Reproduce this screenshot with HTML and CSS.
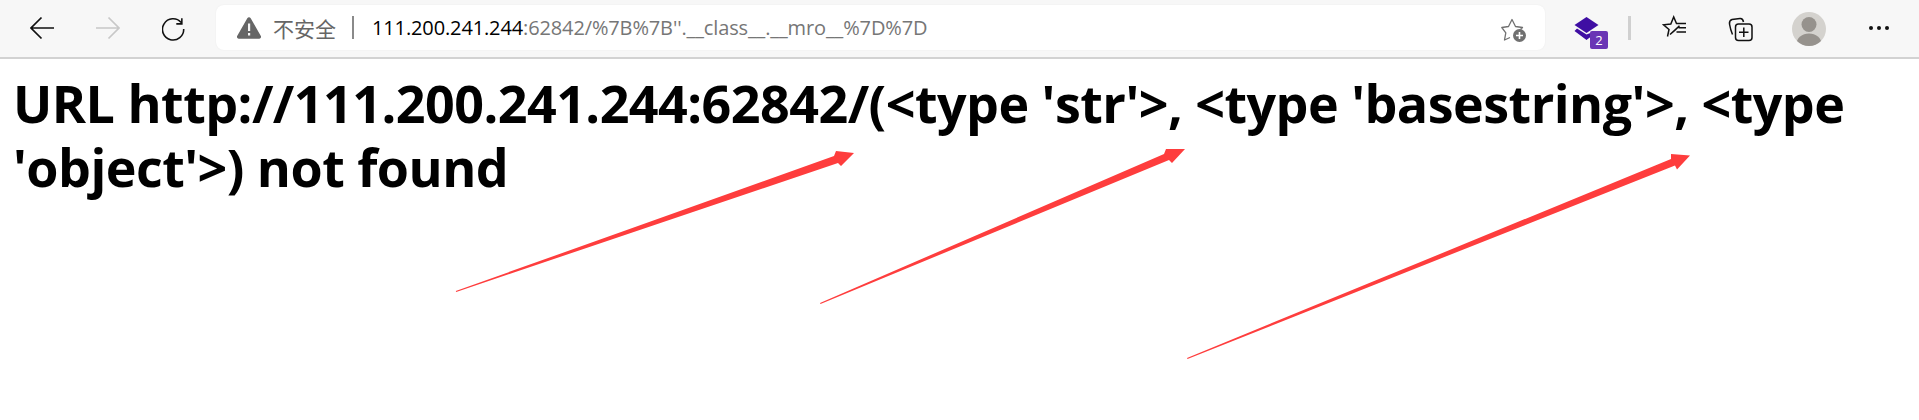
FILE: index.html
```html
<!DOCTYPE html>
<html lang="zh">
<head>
<meta charset="utf-8">
<title>URL not found</title>
<link rel="stylesheet" href="styles.css">
</head>
<body>
<header class="toolbar">
  <nav class="nav">
    <span class="btn"><svg width="24" height="24" viewBox="0 0 24 24" class="ic"><path d="M1 12H24M11.5 1.5 1 12 11.5 22.500"/></svg></span>
    <span class="btn dim"><svg width="24" height="24" viewBox="0 0 24 24" class="ic"><path d="M0 12H23M12.500 1.500 23 12 12.500 22.500"/></svg></span>
    <span class="btn"><svg width="26" height="26" viewBox="0 0 26 26" class="ic"><path d="M20.700 7A11.500 11.500 0 1 0 23.500 14M21.500 2.500V8.500H15.500"/></svg></span>
  </nav>
  <div class="address">
    <svg class="warn" width="24" height="22" viewBox="0 0 24 22"><path d="M10.300 1.200a2 2 0 0 1 3.400 0l10 17.500A2 2 0 0 1 22 21.800H2A2 2 0 0 1 .3 18.700z" fill="#666"/><path d="M11 6.500h2.200V14H11zM11 16h2.200v2.400H11z" fill="#f7f7f7"/></svg>
    <span class="insecure">不安全</span>
    <span class="bar"></span>
    <span class="url"><span class="host">111.200.241.244</span>:62842/%7B%7B''.__class__.__mro__%7D%7D</span>
    <svg class="star" width="26" height="26" viewBox="0 0 26 26"><path d="M9 20.500 3.500 23 4.800 15.800 0.800 10.500 7.500 9.500 11 2.500 14.500 9.500 21.500 10.500 19.500 12.500" fill="none" stroke="#707070" stroke-width="1.300" stroke-linejoin="round"/><circle cx="18.500" cy="18.500" r="6.500" fill="#707070"/><path d="M18.500 15v7M15 18.500h7" stroke="#fff" stroke-width="1.600"/></svg>
  </div>
  <div class="tools">
    <span class="ext">
      <svg width="26" height="27" viewBox="0 -2 26 27"><path d="M12.500 0 24.500 8 12.500 16 .5 8z" fill="#3f0ea3"/><path d="M3 11.500 .5 14 12.500 23 19 18V15L12.500 17.500z" fill="#3f0ea3"/></svg>
      <span class="badge">2</span>
    </span>
    <span class="vsep"></span>
    <span class="tool fav"><svg width="25" height="25" viewBox="0 0 25 25" class="ic thin"><path d="M5.500 21.500 7 14.500 1.500 9.800 8.800 9 11.700 2 14.500 8.500H17.500M17.500 10.800 13 15.300 8 19.500zM16.500 12.800H24M14.500 17H24M16 8.500H24"/></svg></span>
    <span class="tool coll"><svg width="25" height="25" viewBox="0 0 25 25" class="ic thin"><path d="M4.500 17.500C2.800 13.500 2 10 1.500 7 1.200 4.500 2 3.200 4 2.500L12 1.500C14 1.300 15 2.200 15.500 5"/><rect x="7.500" y="7" width="16.500" height="16.500" rx="3"/><path d="M15.800 10.500V20M11 15.200H20.500"/></svg></span>
    <span class="avatar"><svg width="34" height="34" viewBox="0 0 34 34"><defs><clipPath id="round"><circle cx="17" cy="17" r="17"/></clipPath></defs><g clip-path="url(#round)"><rect width="34" height="34" fill="#d4d2ce"/><circle cx="17" cy="12.500" r="7.500" fill="#96928d"/><ellipse cx="17" cy="32" rx="12.500" ry="10.500" fill="#96928d"/></g></svg></span>
    <span class="more"><i></i><i></i><i></i></span>
  </div>
</header>
<main class="page">
  <h1 class="title">URL http://111.200.241.244:62842/(&lt;type 'str'&gt;, &lt;type 'basestring'&gt;, &lt;type 'object'&gt;) not found</h1>
</main>
<svg class="arrows" width="1919" height="420" viewBox="0 0 1919 420">
  <path d="M455.800 291 456.200 292 838 163 841 166 854 153 836 151 834 156z"/>
  <path d="M820 303 820.500 304 1169 160 1172 163 1185 149 1166 149 1164 154z"/>
  <path d="M1187 358 1187.500 359 1675 165.500 1677 169.500 1690 155.500 1671 154 1671 159z"/>
</svg>
</body>
</html>
```
FILE: styles.css
```css
* { box-sizing: border-box; }
html, body { margin: 0; padding: 0; background: #fff; }
body { position: relative; width: 1919px; height: 420px; overflow: hidden; font-family: "Open Sans", "Noto Sans", "Noto Sans CJK SC", sans-serif; }
.toolbar { display: flex; align-items: center; height: 59px; padding: 0 0 2px 30px; background: #f7f7f7; border-bottom: 2px solid #d2d2d2; }
.nav { display: flex; align-items: center; gap: 42px; width: 186px; flex: none; }
.btn { display: flex; width: 24px; height: 26px; align-items: center; justify-content: center; }
.ic { fill: none; stroke: #111; stroke-width: 1.700; }
.ic.thin { stroke-width: 1.500; }
.dim .ic { stroke: #c8c8c8; }
.address { display: flex; align-items: center; width: 1329px; height: 45px; flex: none; margin-right: 29px; padding: 0 18px 0 21px; background: #fff; border-radius: 8px; box-shadow: 0 0 2px rgba(0,0,0,.05); }
.warn { flex: none; }
.insecure { margin-left: 12px; font-size: 21px; color: #666; }
.bar { width: 2px; height: 23px; margin: 0 18px 0 16px; background: #8a8a8a; }
.url { flex: 1; font-size: 20px; color: #767676; white-space: nowrap; letter-spacing: -.13px; }
.host { color: #000; }
.star { flex: none; margin-top: 4px; }
.tools { display: flex; align-items: center; flex: 1; }
.ext { position: relative; display: block; width: 34px; height: 34px; margin-top: 9px; }
.badge { position: absolute; right: 0; bottom: 0; width: 18px; height: 18px; border-radius: 2px; background: #6a35b5; color: #fff; font-size: 13px; line-height: 18px; text-align: center; }
.vsep { width: 3px; height: 24px; margin: 0 31px 0 20px; background: #d0d0d0; }
.tool { display: flex; width: 25px; height: 25px; }
.coll { margin-left: 41px; margin-top: 4px; }
.avatar { display: flex; margin-left: 39px; margin-top: 3px; }
.more { display: flex; gap: 4px; margin-left: 43px; }
.more i { display: block; width: 4px; height: 4px; border-radius: 50%; background: #111; }
.page { padding: 0 8px 0 13px; }
.title { margin: 0; padding-top: 12px; font-size: 52px; line-height: 64px; font-weight: 700; letter-spacing: -.52px; color: #000; }
.arrows { position: absolute; left: 0; top: 0; pointer-events: none; }
.arrows path { fill: #fe3d3d; }
```
